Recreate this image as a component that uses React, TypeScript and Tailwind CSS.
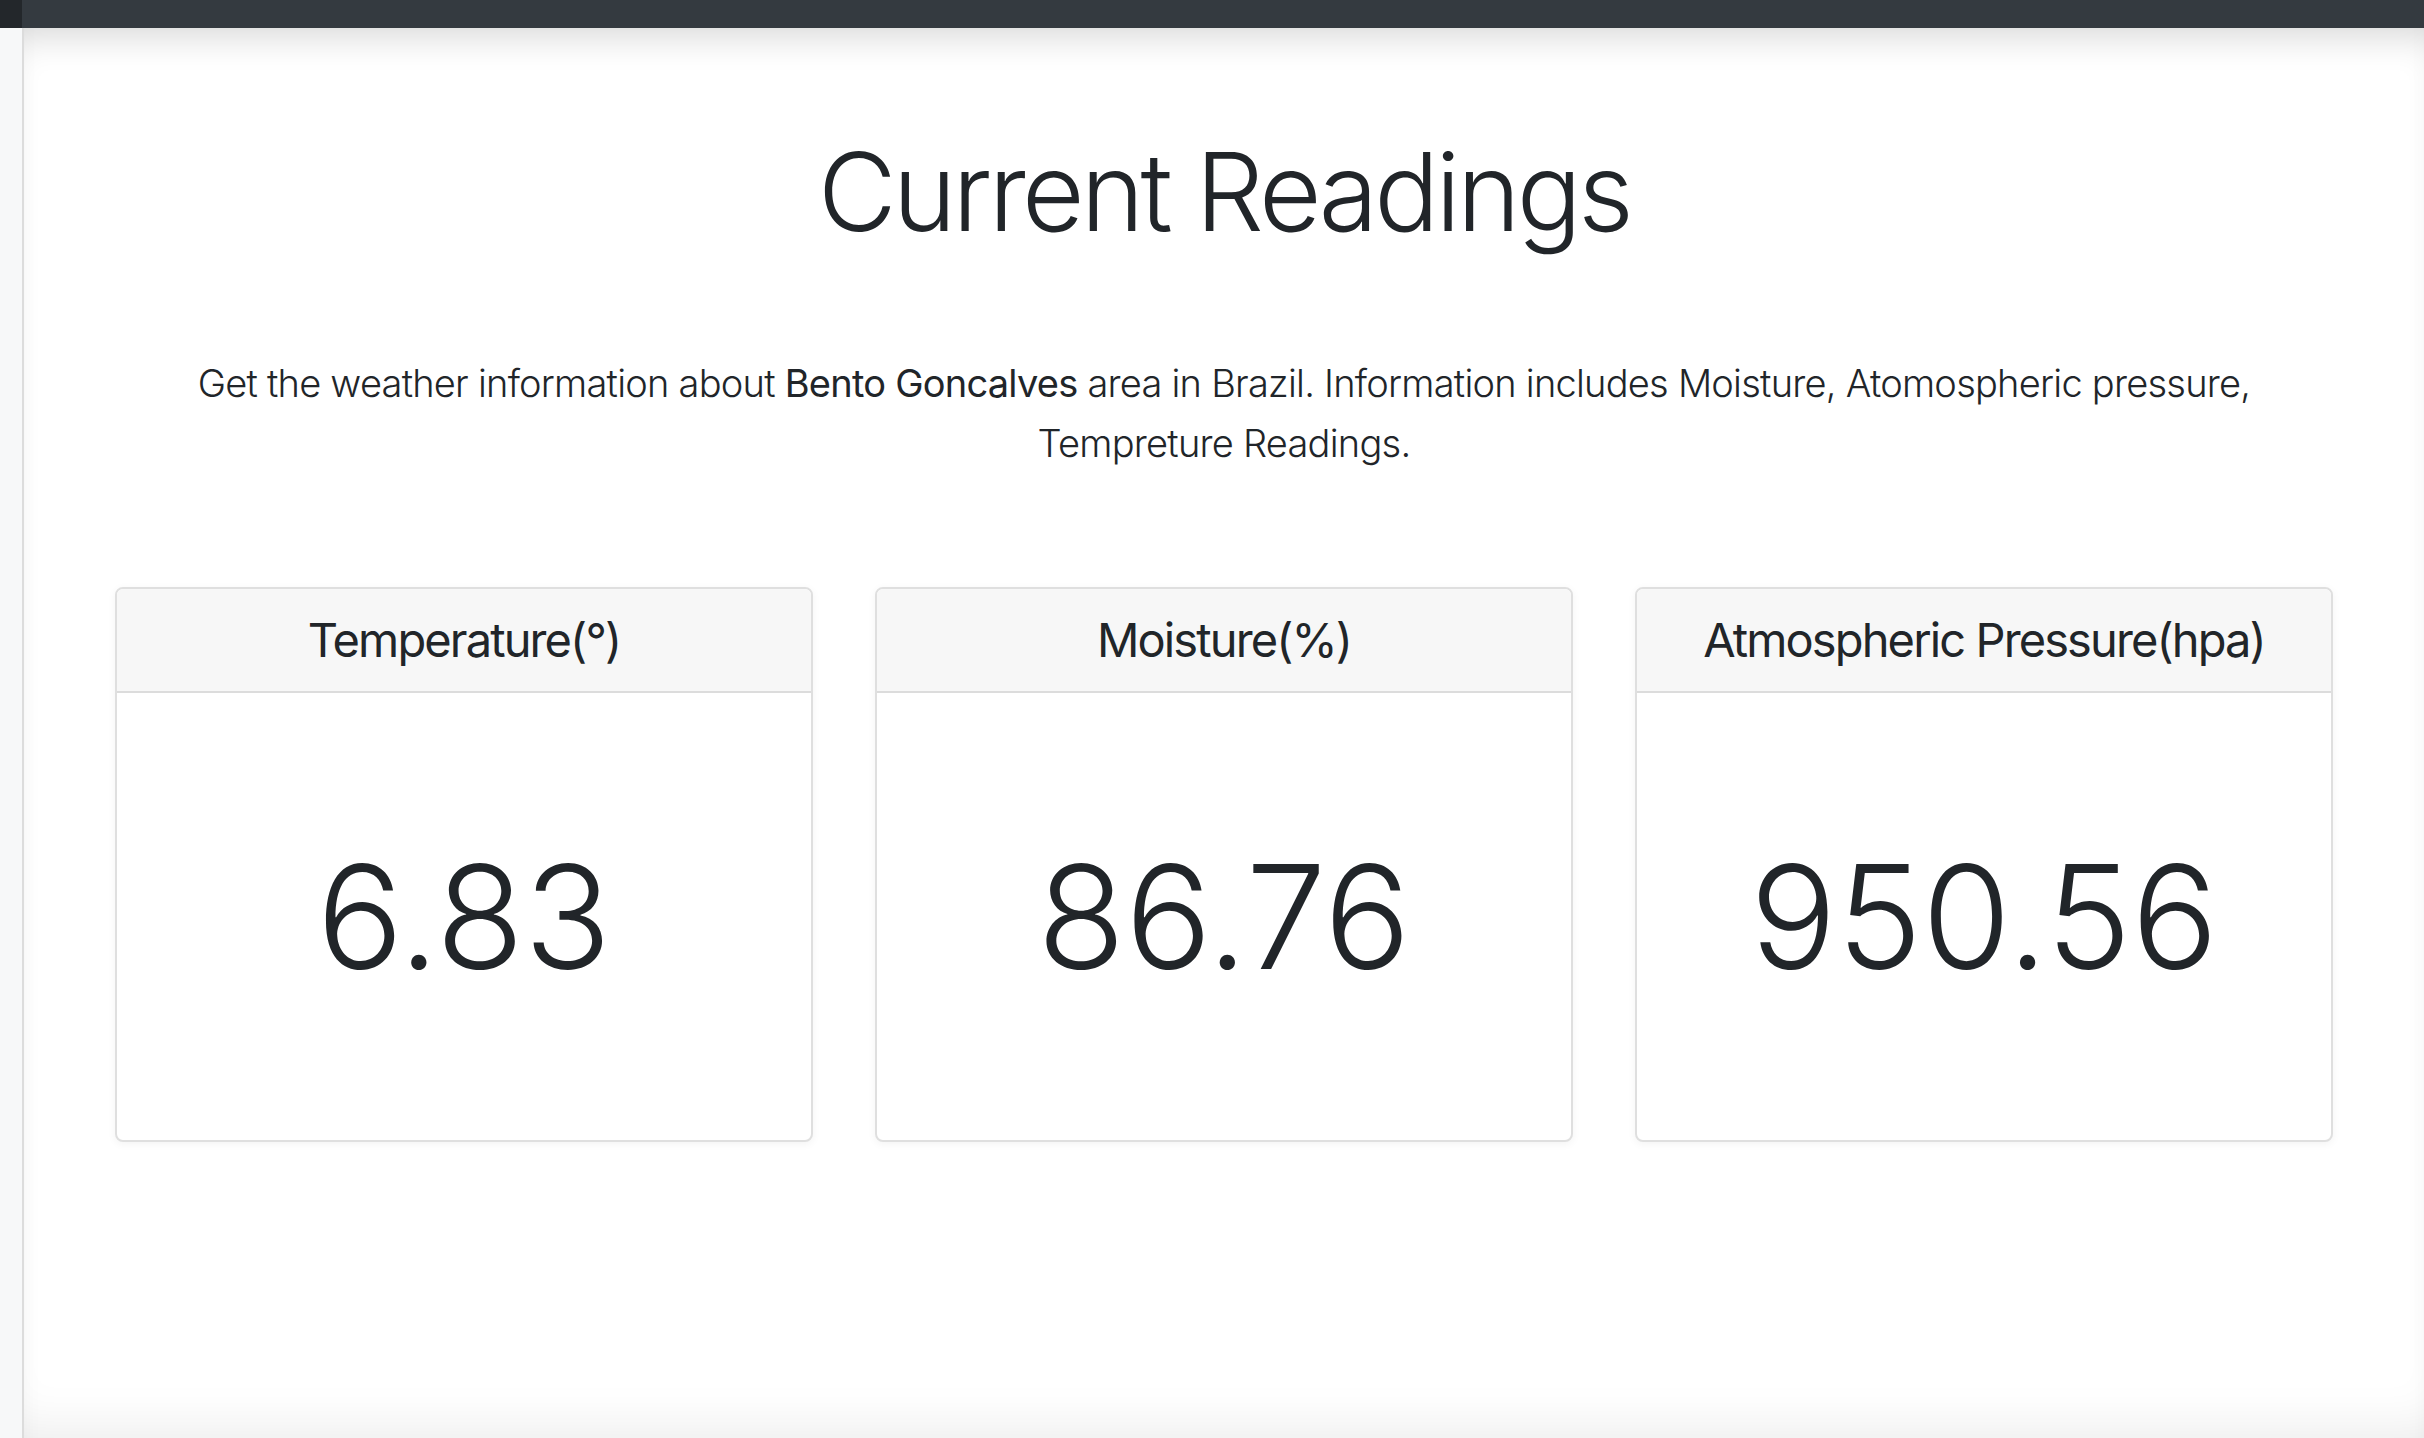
const readings = [
  { label: "Temperature(°)", value: "6.83" },
  { label: "Moisture(%)", value: "86.76" },
  { label: "Atmospheric Pressure(hpa)", value: "950.56" },
];

function ReadingCard({ label, value }: { label: string; value: string }) {
  return (
    <div className="flex flex-col rounded-[8px] border-2 border-[#dfdfdf] bg-white shadow-[0_2px_8px_rgba(0,0,0,0.05)] overflow-hidden">
      <div className="h-[104px] flex items-center justify-center bg-[#f7f7f7] border-b-2 border-[#dcdcdc] text-[47px] tracking-[-0.04em] text-[#212529]">
        {label}
      </div>
      <div className="h-[447px] flex items-center justify-center text-[144px] font-light text-[#212529]">
        {value}
      </div>
    </div>
  );
}

export default function App() {
  return (
    <div className="h-[1438px] w-full flex flex-col bg-white font-['Inter',sans-serif] overflow-hidden">
      <div className="h-[28px] flex shrink-0 bg-[#343a40]">
        <div className="w-[22px] bg-[#23272b]" />
      </div>
      <div className="flex flex-1 min-h-0">
        <div className="w-[24px] shrink-0 bg-[#f7f8f9] border-r-2 border-[#dcdcdc]" />
        <main className="flex-1 flex flex-col items-center px-[91px] shadow-[inset_0_28px_36px_-20px_rgba(0,0,0,0.16),inset_0_-40px_50px_-30px_rgba(0,0,0,0.08)]">
          <h1 className="mt-[99px] text-[108px] leading-[130px] font-light tracking-[-0.035em] text-[#212529]">
            Current Readings
          </h1>
          <p className="mt-[96px] max-w-[2150px] text-center text-[38px] leading-[60px] font-light tracking-[-0.02em] text-[#212529]">
            Get the weather information about <span className="font-normal">Bento Goncalves</span> area in Brazil.
            Information includes Moisture, Atomospheric pressure, Tempreture Readings.
          </p>
          <div className="mt-[114px] w-full grid grid-cols-3 gap-[62px]">
            {readings.map((r) => (
              <ReadingCard key={r.label} label={r.label} value={r.value} />
            ))}
          </div>
        </main>
      </div>
    </div>
  );
}
